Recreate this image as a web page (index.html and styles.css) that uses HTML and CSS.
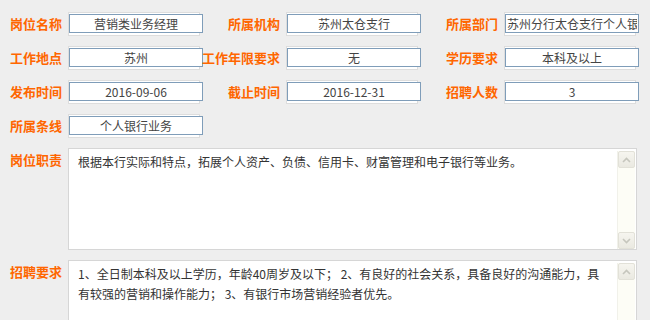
FILE: index.html
```html
<!DOCTYPE html>
<html lang="zh-CN">
<head>
  <meta charset="UTF-8">
  <meta name="viewport" content="width=device-width, initial-scale=1.0">
  <title>招聘岗位详情</title>
  <link rel="stylesheet" href="styles.css">
</head>
<body>

  <div class="job-form">
    <div class="field-grid">
      <span class="field-label">岗位名称</span>
      <div class="field-box"><input type="text" value="营销类业务经理" readonly></div>
      <span class="field-label">所属机构</span>
      <div class="field-box"><input type="text" value="苏州太仓支行" readonly></div>
      <span class="field-label">所属部门</span>
      <div class="field-box"><input type="text" value="苏州分行太仓支行个人银行部" readonly></div>

      <span class="field-label">工作地点</span>
      <div class="field-box"><input type="text" value="苏州" readonly></div>
      <span class="field-label">工作年限要求</span>
      <div class="field-box"><input type="text" value="无" readonly></div>
      <span class="field-label">学历要求</span>
      <div class="field-box"><input type="text" value="本科及以上" readonly></div>

      <span class="field-label">发布时间</span>
      <div class="field-box"><input type="text" value="2016-09-06" readonly></div>
      <span class="field-label">截止时间</span>
      <div class="field-box"><input type="text" value="2016-12-31" readonly></div>
      <span class="field-label">招聘人数</span>
      <div class="field-box"><input type="text" value="3" readonly></div>

      <span class="field-label">所属条线</span>
      <div class="field-box"><input type="text" value="个人银行业务" readonly></div>
    </div>

    <div class="text-row">
      <span class="field-label">岗位职责</span>
      <div class="text-box">
        <div class="text-content">根据本行实际和特点，拓展个人资产、负债、信用卡、财富管理和电子银行等业务。</div>
        <div class="scrollbar">
          <span class="scroll-btn"><svg width="9" height="6" viewBox="0 0 9 6"><polyline points="1,5 4.5,1.5 8,5" fill="none" stroke="#c6c6bd" stroke-width="1.6"/></svg></span>
          <span class="scroll-track"></span>
          <span class="scroll-btn"><svg width="9" height="6" viewBox="0 0 9 6"><polyline points="1,1 4.5,4.5 8,1" fill="none" stroke="#c6c6bd" stroke-width="1.6"/></svg></span>
        </div>
      </div>
    </div>

    <div class="text-row">
      <span class="field-label">招聘要求</span>
      <div class="text-box">
        <div class="text-content">1、全日制本科及以上学历，年龄40周岁及以下； 2、有良好的社会关系，具备良好的沟通能力，具有较强的营销和操作能力； 3、有银行市场营销经验者优先。</div>
        <div class="scrollbar">
          <span class="scroll-btn"><svg width="9" height="6" viewBox="0 0 9 6"><polyline points="1,5 4.5,1.5 8,5" fill="none" stroke="#c6c6bd" stroke-width="1.6"/></svg></span>
          <span class="scroll-track"></span>
          <span class="scroll-btn"><svg width="9" height="6" viewBox="0 0 9 6"><polyline points="1,1 4.5,4.5 8,1" fill="none" stroke="#c6c6bd" stroke-width="1.6"/></svg></span>
        </div>
      </div>
    </div>
  </div>

</body>
</html>
```

FILE: styles.css
```css
html, body {
  overflow: hidden;
}
body {
  font-family: "Noto Sans CJK SC", "Liberation Sans", sans-serif;
  font-size: 12px;
  background-color: #eeeeee;
  color: #333;
  margin: 0;
  padding: 0;
}
.job-form {
  padding: 12px 0 0 10px;
  display: flex;
  flex-direction: column;
  gap: 10px;
}
.field-grid {
  display: grid;
  grid-template-columns: 58px 132px 86px 132px 86px 132px;
  grid-auto-rows: 24px;
  row-gap: 10px;
}
.field-label {
  color: #ff6600;
  font-weight: bold;
  font-size: 13px;
  line-height: 24px;
  text-align: right;
  padding-right: 6px;
  white-space: nowrap;
}
.field-box {
  background-color: #fff;
  border: 1px solid #dddddd;
  height: 22px;
  box-sizing: content-box;
  width: 130px;
}
.field-box input {
  display: block;
  box-sizing: border-box;
  width: 134px;
  height: 19px;
  margin: 1px 0 0 0;
  padding: 0 1px;
  border: 1px solid #7f9db9;
  background-color: #fff;
  font-family: "Noto Sans CJK SC", "Liberation Sans", sans-serif;
  font-size: 12px;
  color: #444;
  text-align: center;
  outline: none;
}
.text-row {
  display: flex;
  align-items: flex-start;
}
.text-row .field-label {
  width: 52px;
}
.text-box {
  display: flex;
  width: 567px;
  height: 100px;
  background-color: #fff;
  border: 1px solid #d6d6d6;
}
.text-content {
  flex: 1;
  padding: 3px 12px 0 9px;
  line-height: 20px;
  color: #333;
}
.scrollbar {
  width: 17px;
  margin: 2px 1px 0 0;
  display: flex;
  flex-direction: column;
  background-color: #fdfdf6;
  border-left: 1px solid #f1f1ea;
}
.scroll-btn {
  height: 15px;
  display: flex;
  align-items: center;
  justify-content: center;
  background: linear-gradient(#f6f5ef, #eae9e1);
  border: 1px solid #e2e1d8;
  border-radius: 2px;
}
.scroll-track {
  flex: 1;
}
```
